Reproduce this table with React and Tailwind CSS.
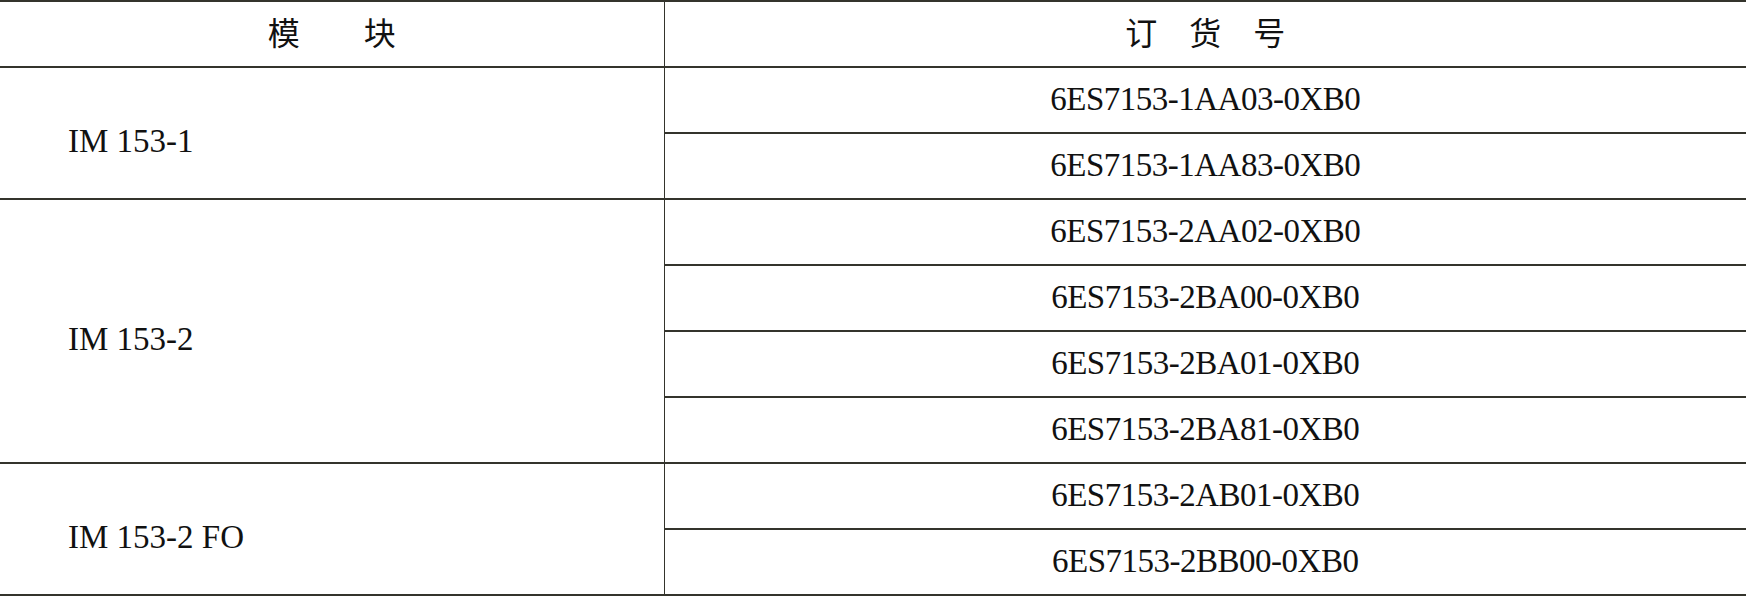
const groups = [
    { name: 'IM 153-1', codes: ['6ES7153-1AA03-0XB0', '6ES7153-1AA83-0XB0'] },
    {
        name: 'IM 153-2',
        codes: ['6ES7153-2AA02-0XB0', '6ES7153-2BA00-0XB0', '6ES7153-2BA01-0XB0', '6ES7153-2BA81-0XB0'],
    },
    { name: 'IM 153-2 FO', codes: ['6ES7153-2AB01-0XB0', '6ES7153-2BB00-0XB0'] },
];

const cjk = { fontFamily: '"Liberation Serif", "Noto Sans CJK SC", serif' };

export default function App() {
    return (
        <div className="w-[1746px] h-[596px] bg-white text-[#111]" style={cjk}>
            <table className="w-full border-collapse table-fixed">
                <colgroup>
                    <col className="w-[664px]" />
                    <col />
                </colgroup>
                <thead>
                    <tr className="h-[66px] border-t-2 border-b-2 border-[#34342c]">
                        <th className="font-normal text-[32px] text-center align-middle border-r-[1.5px] border-[#34342c] whitespace-pre">
                            模{'\u3000\u3000'}块
                        </th>
                        <th className="font-normal text-[32px] text-center align-middle whitespace-pre">
                            订{'\u3000'}货{'\u3000'}号
                        </th>
                    </tr>
                </thead>
                <tbody>
                    {groups.map((g) =>
                        g.codes.map((code, i) => (
                            <tr key={code} className="h-[66px] border-b-2 border-[#34342c]">
                                {i === 0 && (
                                    <td
                                        rowSpan={g.codes.length}
                                        className="pl-[68px] pt-[18px] text-[33px] align-middle border-r-[1.5px] border-[#34342c]"
                                    >
                                        {g.name}
                                    </td>
                                )}
                                <td className="text-[33px] text-center align-middle tracking-[-0.5px]">{code}</td>
                            </tr>
                        ))
                    )}
                </tbody>
            </table>
        </div>
    );
}
